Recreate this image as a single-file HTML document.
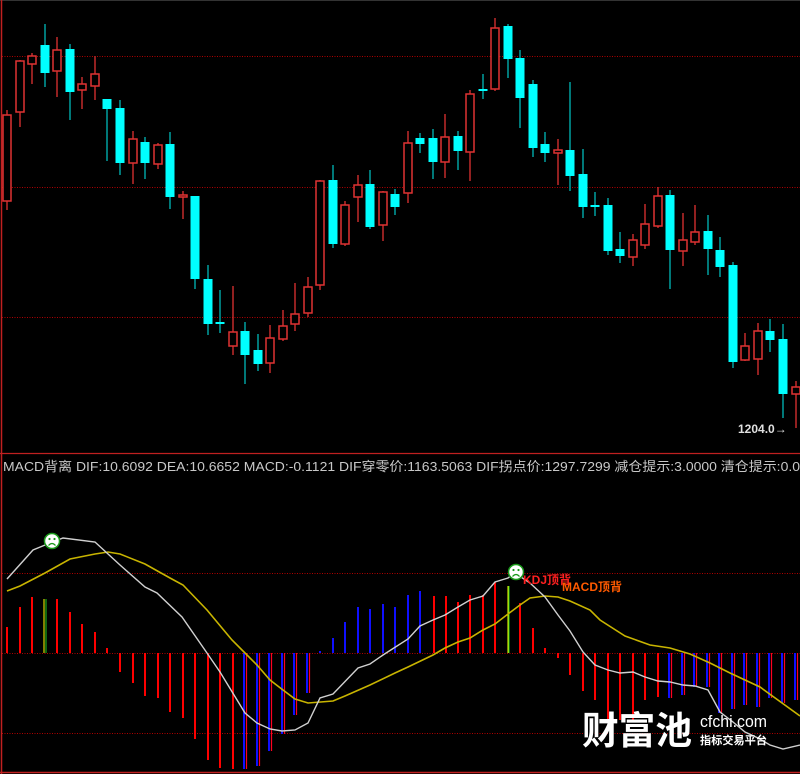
<!DOCTYPE html>
<html><head><meta charset="utf-8"><style>
html,body{margin:0;padding:0;background:#000;width:800px;height:774px;overflow:hidden}
svg{display:block}
</style></head><body>
<svg width="800" height="774" viewBox="0 0 800 774" xmlns="http://www.w3.org/2000/svg">
<rect width="800" height="774" fill="#000"/>
<line x1="0" x2="800" y1="0.5" y2="0.5" stroke="#333" stroke-width="1"/>
<g stroke="#b00000" stroke-width="1" stroke-dasharray="1,1.5">
<line x1="2" x2="800" y1="56.5" y2="56.5"/>
<line x1="2" x2="800" y1="187.5" y2="187.5"/>
<line x1="2" x2="800" y1="317.5" y2="317.5"/>
<line x1="2" x2="800" y1="573.5" y2="573.5"/>
<line x1="2" x2="800" y1="653.5" y2="653.5"/>
<line x1="2" x2="800" y1="733.5" y2="733.5"/>
</g>
<line x1="1.5" x2="1.5" y1="0" y2="774" stroke="#c02020" stroke-width="1.5"/>
<line x1="0" x2="800" y1="453.5" y2="453.5" stroke="#c02020" stroke-width="1.2"/>
<line x1="0" x2="800" y1="772.5" y2="772.5" stroke="#c02020" stroke-width="1.5"/>

<path stroke="#00c8c8" stroke-width="1.2" fill="none" d="M45 24V87M70 44V120M107 99V161M120 100V175M145 137V179M170 132V209M195 196V289M208 265V335M220 290V333M245 322V384M258 334V371M333 165V248M370 170V229M395 189V215M420 133V153M433 129V179M458 131V170M483 74V99M508 24V78M520 50V128M533 80V157M545 132V162M570 82V191M583 149V218M595 192V216M608 198V255M620 232V263M670 190V289M708 215V275M720 237V277M733 262V368M770 319V352M783 324V418"/>
<g fill="#00ffff">
<rect x="40.5" y="45" width="9" height="28"/><rect x="65.5" y="49" width="9" height="43"/><rect x="102.5" y="99" width="9" height="10"/><rect x="115.5" y="108" width="9" height="55"/><rect x="140.5" y="142" width="9" height="21"/><rect x="165.5" y="144" width="9" height="53"/><rect x="190.5" y="196" width="9" height="83"/><rect x="203.5" y="279" width="9" height="45"/><rect x="215.5" y="322" width="9" height="2"/><rect x="240.5" y="331" width="9" height="24"/><rect x="253.5" y="350" width="9" height="14"/><rect x="328.5" y="180" width="9" height="64"/><rect x="365.5" y="184" width="9" height="43"/><rect x="390.5" y="194" width="9" height="13"/><rect x="415.5" y="138" width="9" height="6"/><rect x="428.5" y="138" width="9" height="24"/><rect x="453.5" y="136" width="9" height="15"/><rect x="478.5" y="89" width="9" height="2"/><rect x="503.5" y="26" width="9" height="33"/><rect x="515.5" y="58" width="9" height="40"/><rect x="528.5" y="84" width="9" height="64"/><rect x="540.5" y="144" width="9" height="9"/><rect x="565.5" y="150" width="9" height="26"/><rect x="578.5" y="174" width="9" height="33"/><rect x="590.5" y="205" width="9" height="2"/><rect x="603.5" y="205" width="9" height="46"/><rect x="615.5" y="249" width="9" height="7"/><rect x="665.5" y="195" width="9" height="55"/><rect x="703.5" y="231" width="9" height="18"/><rect x="715.5" y="250" width="9" height="17"/><rect x="728.5" y="265" width="9" height="97"/><rect x="765.5" y="331" width="9" height="9"/><rect x="778.5" y="339" width="9" height="55"/>
</g>
<path stroke="#e03232" stroke-width="1.3" fill="none" d="M7 110V210M20 60V127M32 53V84M57 37V97M82 77V109M95 56V100M133 131V184M158 143V169M183 191V219M233 286V355M270 325V373M283 310V341M295 283V331M308 277V317M320 180V290M345 201V246M358 175V222M383 191V241M408 131V203M445 114V178M470 90V181M495 18V91M558 139V185M633 234V266M645 204V249M658 187V228M683 213V266M695 205V245M745 333V361M758 323V375M796 381V428"/>
<g fill="#000" stroke="#e03232" stroke-width="1.5">
<rect x="3" y="115" width="8" height="86"/><rect x="16" y="61" width="8" height="51"/><rect x="28" y="56" width="8" height="8"/><rect x="53" y="50" width="8" height="21"/><rect x="78" y="84" width="8" height="6"/><rect x="91" y="74" width="8" height="12"/><rect x="129" y="139" width="8" height="24"/><rect x="154" y="145" width="8" height="19"/><rect x="179" y="195" width="8" height="2"/><rect x="229" y="332" width="8" height="14"/><rect x="266" y="338" width="8" height="25"/><rect x="279" y="326" width="8" height="13"/><rect x="291" y="314" width="8" height="10"/><rect x="304" y="287" width="8" height="26"/><rect x="316" y="181" width="8" height="104"/><rect x="341" y="205" width="8" height="39"/><rect x="354" y="185" width="8" height="12"/><rect x="379" y="192" width="8" height="33"/><rect x="404" y="143" width="8" height="50"/><rect x="441" y="137" width="8" height="25"/><rect x="466" y="94" width="8" height="58"/><rect x="491" y="28" width="8" height="61"/><rect x="554" y="150" width="8" height="3"/><rect x="629" y="240" width="8" height="17"/><rect x="641" y="224" width="8" height="21"/><rect x="654" y="196" width="8" height="30"/><rect x="679" y="240" width="8" height="11"/><rect x="691" y="232" width="8" height="10"/><rect x="741" y="346" width="8" height="14"/><rect x="754" y="331" width="8" height="28"/><rect x="792" y="387" width="8" height="7"/>
</g>
<text x="738" y="433" font-family="Liberation Sans, sans-serif" font-size="12" font-weight="bold" fill="#e0e0e0">1204.0→</text>

<text x="3" y="471" font-family="Liberation Sans, 'Noto Sans CJK SC', sans-serif" font-size="13" fill="#c8c8c8" textLength="797" lengthAdjust="spacingAndGlyphs">MACD背离 DIF:10.6092 DEA:10.6652 MACD:-0.1121 DIF穿零价:1163.5063 DIF拐点价:1297.7299 减仓提示:3.0000 清仓提示:0.0</text>

<path stroke="#ff0000" stroke-width="2" fill="none" d="M7 653V627M20 653V607M32 653V597M57 653V599M70 653V612M82 653V624M95 653V632M107 653V648M120 653V672M133 653V683M145 653V696M158 653V698M170 653V712M183 653V718M195 653V739M208 653V760M220 653V768M233 653V769M434 653V596M446 653V596M458 653V602M470 653V595M483 653V595M495 653V582M520 653V603M533 653V628M545 653V648M558 653V658M570 653V675M583 653V691M595 653V700M608 653V722M620 653V720M633 653V720M645 653V700M658 653V697"/>
<path stroke="#ffff00" stroke-width="1" fill="none" d="M44 653V599M508 653V586"/>
<path stroke="#22cc22" stroke-width="1" fill="none" d="M46 653V599M509 653V586"/>
<path stroke="#1010ff" stroke-width="2" fill="none" d="M320 653V651M333 653V638M345 653V622M358 653V607M370 653V609M383 653V604M395 653V607M408 653V595M420 653V591M244 653V769M257 653V766M269 653V751M282 653V734M294 653V715M307 653V693M669 653V698M682 653V695M694 653V687M707 653V687M719 653V713M732 653V709M744 653V705M757 653V707M769 653V698M782 653V703M795 653V700"/>
<path stroke="#ff0020" stroke-width="1.2" fill="none" d="M246.5 653V769M259.5 653V766M271.5 653V751M284.5 653V734M296.5 653V715M309.5 653V693M671.5 653V698M684.5 653V695M696.5 653V687M709.5 653V687M721.5 653V713M734.5 653V709M746.5 653V705M759.5 653V707M771.5 653V698M784.5 653V703M797.5 653V700"/>

<polyline fill="none" stroke="#c8b400" stroke-width="1.6" points="7,591 20,586 45,573 70,559 95,554 108,552 120,554 145,564 170,578 183,585 207,610 232,640 245,653 257,665 270,680 283,690 295,699 308,703 333,701 345,696 370,685 395,673 408,667 433,655 445,648 458,642 470,638 483,630 495,624 508,614 520,605 530,598 545,596 558,597 570,601 590,610 600,620 625,636 650,645 670,648 690,654 710,663 730,673 760,687 800,716"/>
<polyline fill="none" stroke="#d0d0d0" stroke-width="1.4" points="7,579 33,550 50,543 63,538 95,542 120,565 145,587 157,593 182,617 207,653 220,672 245,713 257,723 270,729 282,731 295,730 308,723 320,698 333,694 358,668 370,664 383,655 408,639 420,626 433,620 445,615 458,607 470,600 483,596 495,582 508,578 515,573 530,583 545,597 558,615 570,631 583,652 595,665 608,670 620,673 633,672 645,677 658,681 670,682 683,685 695,686 708,690 720,712 733,722 745,732 758,738 770,745 783,749 800,745"/>

<g>
<circle cx="52" cy="541" r="7.5" fill="#fff" stroke="#1a9a1a" stroke-width="1.5"/>
<circle cx="49.5" cy="539" r="1.1" fill="#1a9a1a"/><circle cx="54.5" cy="539" r="1.1" fill="#1a9a1a"/>
<path d="M48.5 545.5Q52 541.5 55.5 545.5" stroke="#1a9a1a" stroke-width="1.3" fill="none"/>
<circle cx="516" cy="572" r="7.5" fill="#fff" stroke="#1a9a1a" stroke-width="1.5"/>
<circle cx="513.5" cy="570" r="1.1" fill="#1a9a1a"/><circle cx="518.5" cy="570" r="1.1" fill="#1a9a1a"/>
<path d="M512.5 576.5Q516 572.5 519.5 576.5" stroke="#1a9a1a" stroke-width="1.3" fill="none"/>
</g>
<text x="523" y="584" font-family="Liberation Sans, 'Noto Sans CJK SC', sans-serif" font-size="12" font-weight="bold" fill="#ff2020">KDJ顶背</text>
<text x="562" y="591" font-family="Liberation Sans, 'Noto Sans CJK SC', sans-serif" font-size="12" font-weight="bold" fill="#ff5a00">MACD顶背</text>

<text x="582" y="744" font-family="'Noto Sans CJK SC', 'WenQuanYi Zen Hei', sans-serif" font-size="38" font-weight="bold" fill="#fff" textLength="110" lengthAdjust="spacingAndGlyphs">财富池</text>
<text x="700" y="727" font-family="Liberation Sans, sans-serif" font-size="17" fill="#fff" textLength="67" lengthAdjust="spacingAndGlyphs">cfchi.com</text>
<text x="700" y="744" font-family="'Noto Sans CJK SC', sans-serif" font-size="11" font-weight="bold" fill="#fff" textLength="67" lengthAdjust="spacingAndGlyphs">指标交易平台</text>
</svg>
</body></html>
